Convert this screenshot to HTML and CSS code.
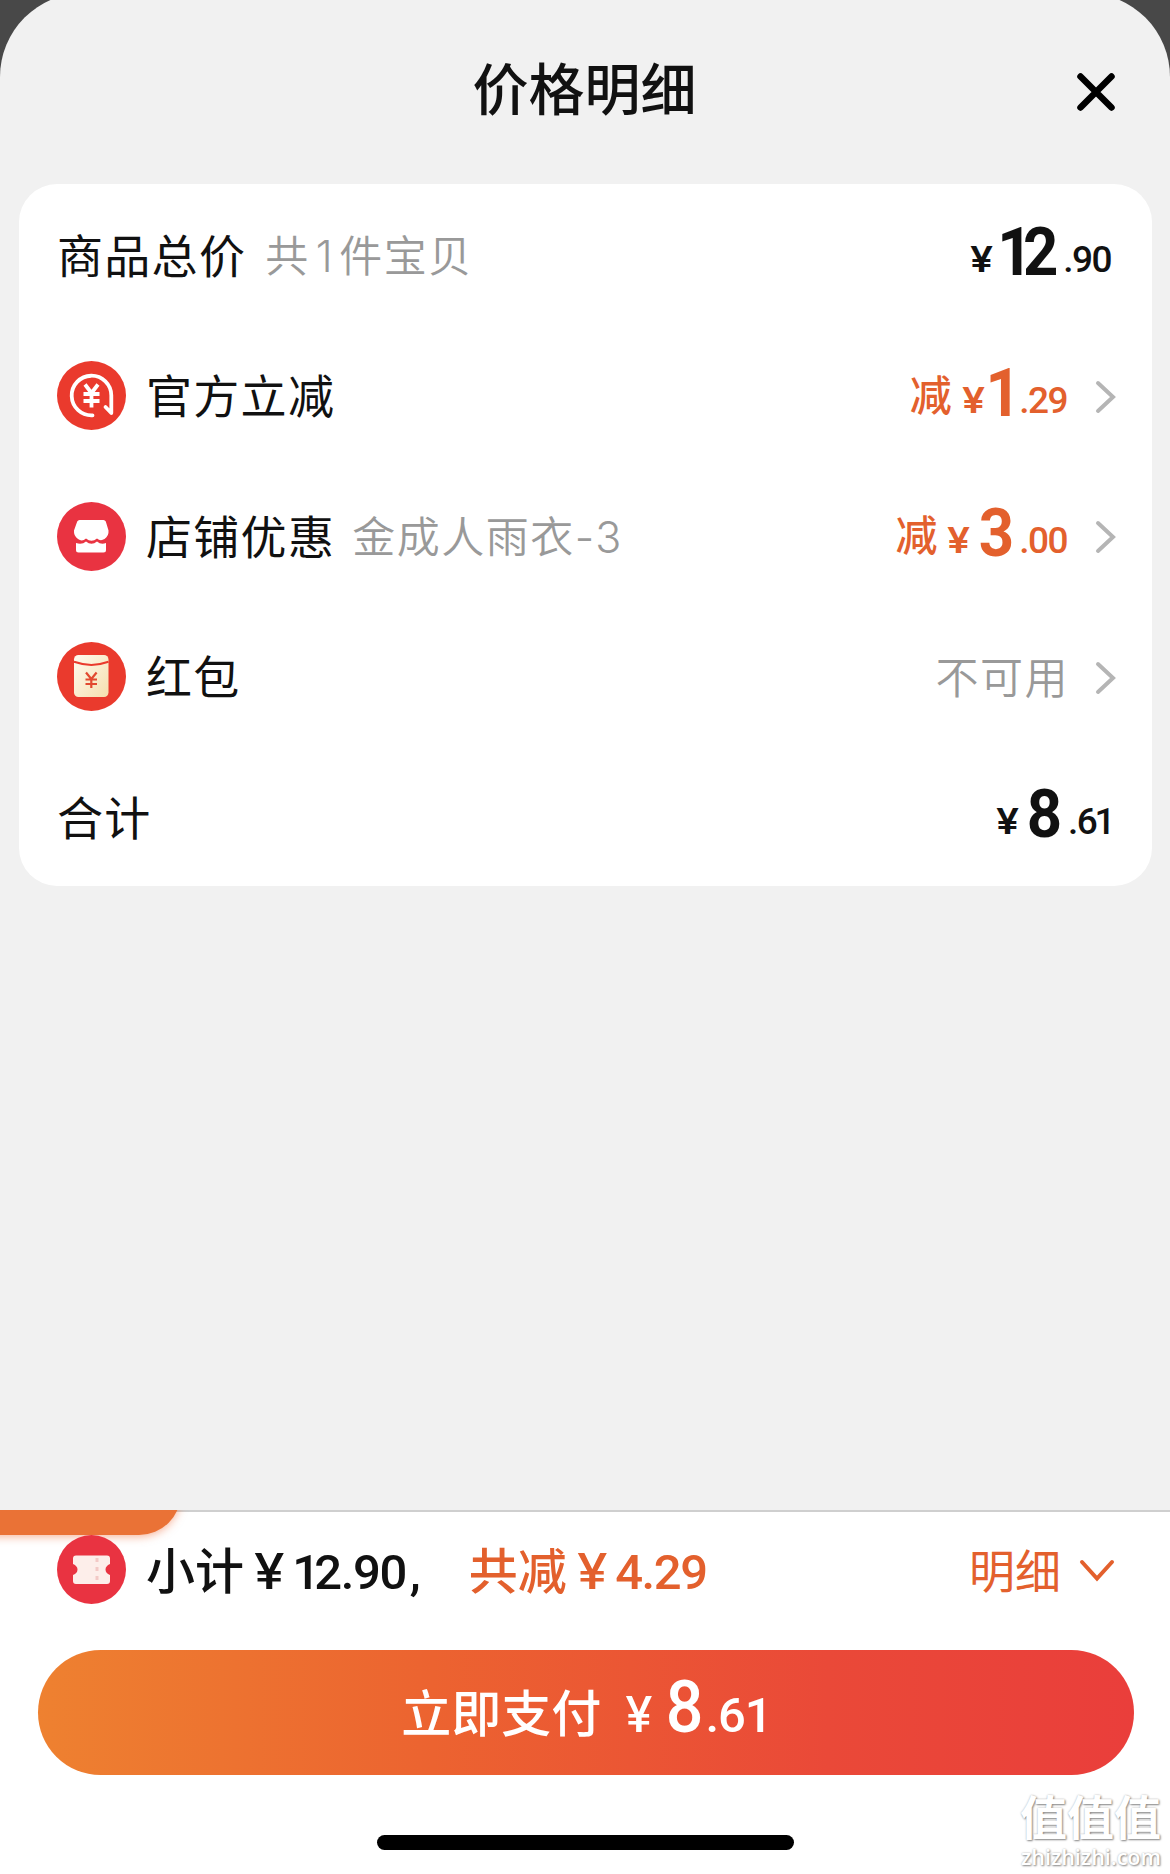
FILE: index.html
```
<!DOCTYPE html>
<html lang="zh-CN">
<head>
    <meta charset="UTF-8">
    <meta name="viewport" content="width=device-width, initial-scale=1.0">
    <title>价格明细</title>
    <link rel="stylesheet" href="styles.css">
</head>
<body>
    <div class="sheet">
        <div class="header">
            <h1>价格明细</h1>
            <svg class="close" width="42" height="42" viewBox="0 0 42 42">
                <path d="M5.500 5.500L36.500 36.500M36.500 5.500L5.500 36.500"/>
            </svg>
        </div>

        <div class="card">
            <div class="row">
                <span class="label">商品总价</span>
                <span class="desc count">共<i class="one">1</i>件宝贝</span>
                <div class="price"><span class="yen">¥</span><span class="big"><i class="slim">1</i>2</span><span class="small">.90</span></div>
            </div>
            <div class="row">
                <svg class="icon" viewBox="0 0 69 69">
                    <circle cx="34.500" cy="34.500" r="34.500" fill="#ea3a2d"/>
                    <path d="M35.500 54.300A19.800 19.800 0 1 1 54.300 34.500V52L48.500 46" fill="none" stroke="#fff" stroke-width="3.800" stroke-linecap="round" stroke-linejoin="round"/>
                    <path d="M28 23.500L34.500 32L41 23.500M34.500 32V46.500M26.500 33H42.500M26.500 40H42.500" fill="none" stroke="#fff" stroke-width="3.800"/>
                </svg>
                <span class="label">官方立减</span>
                <div class="price cut"><span class="minus">减</span><span class="yen">¥</span><span class="big"><i class="slim">1</i></span><span class="small">.29</span></div>
                <svg class="arrow" viewBox="0 0 22 34"><path d="M3 3L18 17L3 31"/></svg>
            </div>
            <div class="row">
                <svg class="icon" viewBox="0 0 69 69">
                    <circle cx="34.500" cy="34.500" r="34.500" fill="#e93341"/>
                    <path d="M22.500 18H46.500Q48 18 48.800 19.500L51.500 28.500Q52 34 47.500 37Q43.500 39.500 40 36.500Q34.500 41 29 36.500Q25 40 21 37Q16.500 34 17 28.500L20.200 19.500Q21 18 22.500 18Z" fill="#fff"/>
                    <path d="M19 41Q25 43 29 39.500Q34.500 44 40 39.500Q44 43 49 41V48Q49 50.500 46.500 50.500H21.500Q19 50.500 19 48Z" fill="#fff"/>
                </svg>
                <span class="label">店铺优惠</span>
                <span class="desc">金成人雨衣-3</span>
                <div class="price cut"><span class="minus">减</span><span class="yen">¥</span><span class="big">3</span><span class="small">.00</span></div>
                <svg class="arrow" viewBox="0 0 22 34"><path d="M3 3L18 17L3 31"/></svg>
            </div>
            <div class="row">
                <svg class="icon" viewBox="0 0 69 69">
                    <defs>
                        <linearGradient id="packet" x1="0" y1="0" x2="1" y2="1">
                            <stop offset="0" stop-color="#fffaf0"/>
                            <stop offset="1" stop-color="#f5dfae"/>
                        </linearGradient>
                    </defs>
                    <circle cx="34.500" cy="34.500" r="34.500" fill="#ea3a2d"/>
                    <rect x="17" y="13" width="34.500" height="42" rx="4.500" fill="url(#packet)"/>
                    <path d="M17 19.800Q34.500 26 51.500 19.800" fill="none" stroke="#ea3a2d" stroke-width="2"/>
                    <path d="M29 30.500L34.300 37L39.600 30.500M34.300 37V46M28.500 37.500H40M28.500 42H40" fill="none" stroke="#e2492f" stroke-width="2.200"/>
                </svg>
                <span class="label">红包</span>
                <span class="disabled">不可用</span>
                <svg class="arrow" viewBox="0 0 22 34"><path d="M3 3L18 17L3 31"/></svg>
            </div>
            <div class="row">
                <span class="label">合计</span>
                <div class="price"><span class="yen">¥</span><span class="big">8</span><span class="small">.6<i class="slim">1</i></span></div>
            </div>
        </div>
    </div>

    <div class="footer">
        <div class="tab"></div>
        <div class="summary">
            <svg class="icon" viewBox="0 0 69 69">
                <circle cx="34.500" cy="34.500" r="34.500" fill="#e93341"/>
                <path d="M19 20.500H50Q53 20.500 53 23.500V29Q48.500 31 48.500 34.500Q48.500 38 53 40V46Q53 49 50 49H19Q16 49 16 46V40Q20.500 38 20.500 34.500Q20.500 31 16 29V23.500Q16 20.500 19 20.500Z" fill="#fdeeea"/>
                <path d="M40 23V47" stroke="#f3c9c6" stroke-width="3" stroke-dasharray="4 5"/>
            </svg>
            <span class="subtotal">小计<b class="sum-yen">¥</b><b class="sum-num"><i class="slim">1</i>2.90</b><b class="comma">,</b></span>
            <span class="saved">共减<b class="sum-yen">¥</b><b class="sum-num">4.29</b></span>
            <span class="detail">明细</span>
            <svg class="down" viewBox="0 0 36 24"><path d="M3 3L18 19.500L33 3"/></svg>
        </div>
        <div class="pay">
            <span class="pay-text">立即支付</span><span class="pay-yen">¥</span><span class="pay-big">8</span><span class="pay-small">.6<i class="slim">1</i></span>
        </div>
        <div class="home-bar"></div>
    </div>

    <div class="watermark">
        <div class="wm-name">值值值</div>
        <div class="wm-url">zhizhizhi.com</div>
    </div>
</body>
</html>
```
FILE: styles.css
```
* {
    box-sizing: border-box;
}
body {
    margin: 0;
    height: 1874px;
    display: flex;
    flex-direction: column;
    overflow: hidden;
    position: relative;
    background: #484848;
    color: #111;
    font-family: "Noto Sans CJK SC", sans-serif;
}
.sheet {
    flex: 1;
    margin-top: -7px;
    padding: 0 18px 0 19px;
    background: #f1f1f1;
    border-radius: 84px 84px 0 0;
}
.header {
    height: 191px;
    padding: 0 2px 5px 0;
    display: flex;
    align-items: center;
    justify-content: center;
    position: relative;
}
h1 {
    margin: 0;
    font-size: 56px;
    line-height: 80px;
    font-weight: 500;
}
.close {
    position: absolute;
    right: 35px;
    top: 78px;
    fill: none;
    stroke: #000;
    stroke-width: 6.5;
    stroke-linecap: round;
}
.card {
    height: 702px;
    padding: 1px 39px 0 38px;
    background: #fff;
    border-radius: 38px;
}
.row {
    height: 140.5px;
    display: flex;
    align-items: center;
}
.icon {
    width: 69px;
    height: 69px;
    margin-right: 20px;
    flex: none;
}
.label {
    font-size: 46px;
    letter-spacing: 1.3px;
    padding-bottom: 5px;
}
.desc {
    margin-left: 17px;
    padding-bottom: 4px;
    color: #999;
    font-family: Inter, "Noto Sans CJK SC", sans-serif;
    font-size: 43px;
    font-weight: 350;
    letter-spacing: 1.5px;
}
.count {
    margin-left: 19px;
}
.one {
    font-style: normal;
    margin: 0 5px 0 6px;
}
.slim {
    font-style: normal;
    letter-spacing: -.12em;
}
.price {
    margin-left: auto;
    margin-right: 2px;
    padding-bottom: 12px;
    display: flex;
    align-items: baseline;
    font-family: Roboto, sans-serif;
    font-weight: 500;
}
.yen {
    font-family: Inter, sans-serif;
    font-size: 36px;
    line-height: 40px;
    font-weight: 600;
    margin-right: 8px;
    transform: scaleX(1.14);
    transform-origin: left;
}
.big {
    font-size: 67px;
    line-height: 70px;
    font-weight: 700;
    letter-spacing: -3px;
    position: relative;
    top: 3px;
    transform: scaleX(.92);
    transform-origin: right;
}
.big .slim {
    margin-left: -.1em;
    letter-spacing: -.16em;
}
.small {
    font-size: 37px;
    line-height: 40px;
    letter-spacing: -1.5px;
    margin-left: 8px;
}
.small .slim {
    margin-left: -.05em;
}
.cut {
    color: #e3602d;
}
.minus {
    font-family: "Noto Sans CJK SC", sans-serif;
    font-size: 42px;
    line-height: 50px;
    margin-right: 10px;
    position: relative;
    top: -2px;
}
.arrow {
    width: 22px;
    height: 34px;
    margin-top: 2px;
    margin-left: 26px;
    margin-right: -4px;
    flex: none;
    fill: none;
    stroke: #b5b5b5;
    stroke-width: 4;
    stroke-linecap: round;
}
.disabled {
    margin-left: auto;
    padding-bottom: 4px;
    color: #999;
    font-size: 43px;
    font-weight: 350;
    letter-spacing: 1.5px;
}
.footer {
    height: 364px;
    background: #fff;
    border-top: 2px solid #cfcfcf;
    position: relative;
}
.tab {
    position: absolute;
    left: -40px;
    top: -27px;
    width: 221px;
    height: 50px;
    background: #ea7236;
    border-radius: 0 0 42px 0;
    box-shadow: 0 2px 8px rgba(240, 110, 60, .5);
    clip-path: inset(25px -20px -20px 0);
}
.summary {
    height: 115px;
    padding: 0 55px 0 57px;
    display: flex;
    align-items: center;
    position: relative;
}
.subtotal,
.saved {
    font-size: 49px;
    font-weight: 500;
    white-space: nowrap;
    padding-bottom: 4px;
}
.saved {
    color: #e3602d;
    margin-left: 48px;
}
.sum-yen,
.sum-num,
.comma {
    font-family: Roboto, sans-serif;
    font-weight: 500;
}
.sum-yen {
    display: inline-block;
    font-family: Inter, sans-serif;
    line-height: 1;
    margin: 0 11px 0 10px;
    transform: scaleX(1.12);
    transform-origin: left;
}
.sum-num {
    letter-spacing: -1.4px;
}
.comma {
    margin-left: 4px;
}
.detail {
    margin-left: auto;
    padding-bottom: 3px;
    color: #e3602d;
    font-size: 46px;
}
.down {
    width: 36px;
    height: 24px;
    margin-top: 2px;
    margin-left: 18px;
    fill: none;
    stroke: #e3602d;
    stroke-width: 4;
    stroke-linecap: round;
}
.pay {
    height: 125px;
    margin: 23px 36px 0 38px;
    padding-right: 4px;
    border-radius: 63px;
    background: linear-gradient(90deg, #ee8130, #ec6330 36%, #ea4938 72%, #ea3e3b);
    color: #fff;
    display: flex;
    align-items: baseline;
    justify-content: center;
    line-height: 116px;
    font-family: Roboto, sans-serif;
    font-weight: 500;
}
.pay-text {
    font-family: "Noto Sans CJK SC", sans-serif;
    font-size: 50px;
}
.pay-yen {
    font-family: Inter, sans-serif;
    font-size: 49px;
    margin: 0 12px 0 24px;
}
.pay-big {
    font-size: 72px;
    transform: scaleX(.92);
}
.pay-small {
    font-size: 49px;
    letter-spacing: -1px;
}
.home-bar {
    width: 417px;
    height: 15px;
    margin: 60px auto 0;
    border-radius: 8px;
    background: #000;
}
.watermark {
    position: absolute;
    right: 9px;
    bottom: 4px;
    color: #fff;
    text-align: right;
    text-shadow: 1px 1px 2px #888, 0 0 2px #bbb;
}
.wm-name {
    font-size: 47px;
    line-height: 50px;
    font-weight: 700;
    margin-bottom: 3px;
}
.wm-url {
    font-family: "Open Sans", sans-serif;
    font-size: 21.5px;
    line-height: 27px;
    font-weight: 600;
}
```
